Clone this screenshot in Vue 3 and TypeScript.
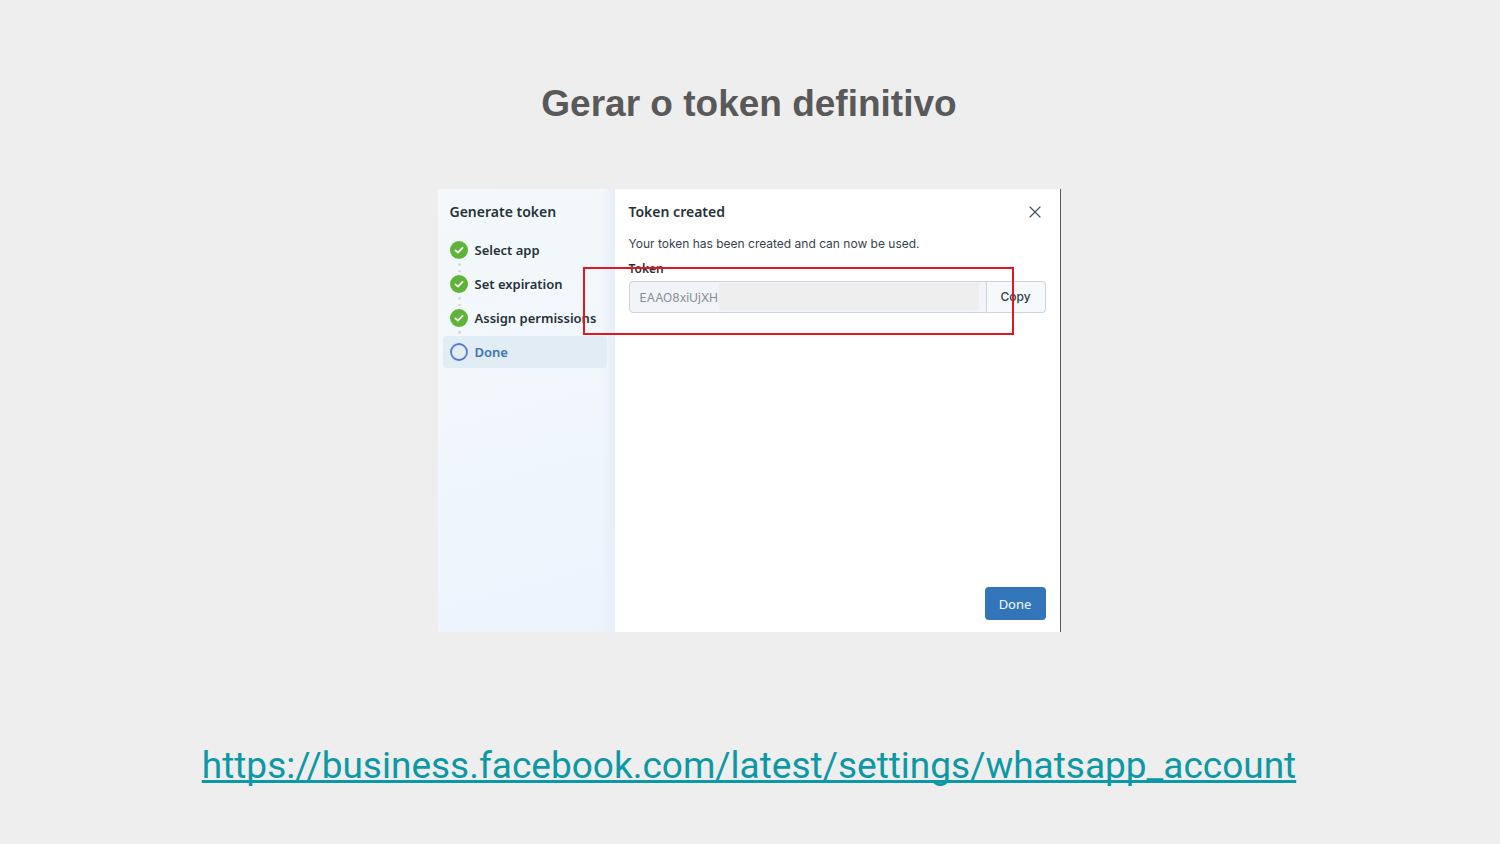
<script setup lang="ts">
import { ref } from 'vue'

interface Step {
  label: string
  done: boolean
}

const steps: Step[] = [
  { label: 'Select app', done: true },
  { label: 'Set expiration', done: true },
  { label: 'Assign permissions', done: true },
  { label: 'Done', done: false },
]

const token = ref('EAAO8xiUjXH')
</script>

<template>
  <main class="slide">
    <h1 class="title">Gerar o token definitivo</h1>

    <section class="dialog" aria-label="Generate token">
      <aside class="sidebar">
        <h2 class="heading">Generate token</h2>
        <ol class="steps">
          <li v-for="step in steps" :key="step.label" class="step" :class="{ current: !step.done }">
            <svg v-if="step.done" class="mark" viewBox="0 0 18 18" aria-hidden="true">
              <circle cx="9" cy="9" r="9" fill="#5fb336" />
              <path d="M5.4 9.3 7.9 11.6 12.6 6.8" fill="none" stroke="#fff" stroke-width="1.7" stroke-linecap="round" stroke-linejoin="round" />
            </svg>
            <svg v-else class="mark" viewBox="0 0 18 18" aria-hidden="true">
              <circle cx="9" cy="9" r="8" fill="none" stroke="#5378d2" stroke-width="1.8" />
            </svg>
            <span>{{ step.label }}</span>
          </li>
        </ol>
      </aside>

      <div class="content">
        <header class="bar">
          <h2 class="heading">Token created</h2>
          <button class="close" type="button" aria-label="Close">
            <svg viewBox="0 0 12 12" aria-hidden="true">
              <path d="M1 1 11 11M11 1 1 11" fill="none" stroke="#46545c" stroke-width="1.2" stroke-linecap="round" />
            </svg>
          </button>
        </header>
        <p class="message">Your token has been created and can now be used.</p>
        <label class="label" for="token">Token</label>
        <div class="field">
          <div class="box">
            <input id="token" v-model="token" class="input" type="text" readonly />
            <span class="mask"></span>
          </div>
          <button class="copy" type="button">Copy</button>
        </div>
        <footer class="actions">
          <button class="primary" type="button">Done</button>
        </footer>
      </div>

      <span class="highlight"></span>
    </section>

    <a class="link" href="https://business.facebook.com/latest/settings/whatsapp_account">https://business.facebook.com/latest/settings/whatsapp_account</a>
  </main>
</template>

<style>
body {
  margin: 0;
  background: #eeeeee;
}
</style>

<style scoped>
.slide {
  box-sizing: border-box;
  min-height: 100vh;
  padding: 82px 26px 54px 24px;
  display: flex;
  flex-direction: column;
  align-items: center;
  background: #eeeeee;
  color: #26323a;
  font-family: "Noto Sans", "Open Sans", sans-serif;
}

.title {
  margin: 0 0 63px;
  font: bold 37px/44px "Liberation Sans", Arial, sans-serif;
  color: #595959;
}

.dialog {
  position: relative;
  box-sizing: border-box;
  width: 100%;
  max-width: 623px;
  min-height: 443px;
  display: grid;
  grid-template-columns: 177px 1fr;
  background: #fff;
  border-right: 1px solid #55585a;
}

.sidebar {
  padding: 12px 8px 12px 5px;
  background:
    linear-gradient(90deg, rgba(226, 235, 250, 0) 92%, #e7eefa 100%),
    linear-gradient(165deg, #f3f9fa 0%, #f1f7fb 45%, #f0f6fe 60%, #edf3fc 100%);
}

.heading {
  margin: 0;
  font-size: 14px;
  line-height: 22px;
  font-weight: 600;
}

.sidebar .heading {
  padding-left: 7px;
}

.steps {
  margin: 11px 0 0;
  padding: 0;
  list-style: none;
  display: grid;
  gap: 2px;
}

.step {
  position: relative;
  height: 32px;
  padding-left: 7px;
  display: flex;
  align-items: center;
  gap: 7px;
  border-radius: 4px;
  font-size: 13px;
  line-height: 20px;
  font-weight: 600;
  white-space: nowrap;
}

.step:not(:last-child)::after {
  content: "";
  position: absolute;
  left: 15px;
  top: 27px;
  width: 3px;
  height: 11px;
  background: radial-gradient(circle, #d3dbe1 1px, transparent 2px) 0 0 / 3px 7px;
}

.step.current {
  background: #e2ecf5;
  color: #3a72b8;
}

.mark {
  flex: none;
  width: 18px;
  height: 18px;
}

.content {
  padding: 12px 14px 12px;
  display: flex;
  flex-direction: column;
}

.bar {
  display: flex;
  justify-content: space-between;
  align-items: center;
}

button {
  font-family: inherit;
  cursor: pointer;
}

.close {
  width: 22px;
  height: 22px;
  padding: 5px;
  border: 0;
  background: none;
}

.close svg {
  display: block;
  width: 12px;
  height: 12px;
}

.message {
  margin: 11px 0 6px;
  font: 12px/20px Inter, Roboto, sans-serif;
  color: #36434b;
}

.label {
  font-size: 12px;
  line-height: 18px;
  font-weight: 600;
}

.field {
  margin-top: 3px;
  display: flex;
  height: 32px;
}

.box {
  position: relative;
  flex: 1;
  min-width: 0;
}

.input {
  box-sizing: border-box;
  width: 100%;
  height: 100%;
  padding: 0 10px;
  border: 1px solid #ccd3da;
  border-radius: 4px 0 0 4px;
  background: #f1f4f9;
  color: #868e95;
  font: 12px/20px Inter, Roboto, sans-serif;
  outline: none;
}

.mask {
  position: absolute;
  inset: 2px 8px 3px 90px;
  background: #eeeeee;
}

.copy {
  width: 59px;
  padding: 0;
  border: 1px solid #ccd3da;
  border-left: 0;
  border-radius: 0 4px 4px 0;
  background: #f6f9fc;
  color: #303c44;
  font: 500 12px/20px Inter, sans-serif;
}

.actions {
  margin-top: auto;
  display: flex;
  justify-content: flex-end;
}

.primary {
  width: 61px;
  height: 33px;
  padding: 0;
  border: 0;
  border-radius: 4px;
  background: #3375b9;
  color: #f4f9ff;
  font-size: 13px;
  line-height: 20px;
}

.highlight {
  position: absolute;
  box-sizing: border-box;
  inset: 78px 46px auto 145px;
  height: 68px;
  border: 2px solid #e3171d;
  pointer-events: none;
}

.link {
  margin-top: auto;
  max-width: 100%;
  overflow-wrap: anywhere;
  font: 400 37px/48px Roboto, sans-serif;
  color: #0d98a5;
  text-decoration-line: underline;
  text-decoration-thickness: 3px;
  text-underline-offset: 2px;
  text-decoration-skip-ink: none;
}
</style>
